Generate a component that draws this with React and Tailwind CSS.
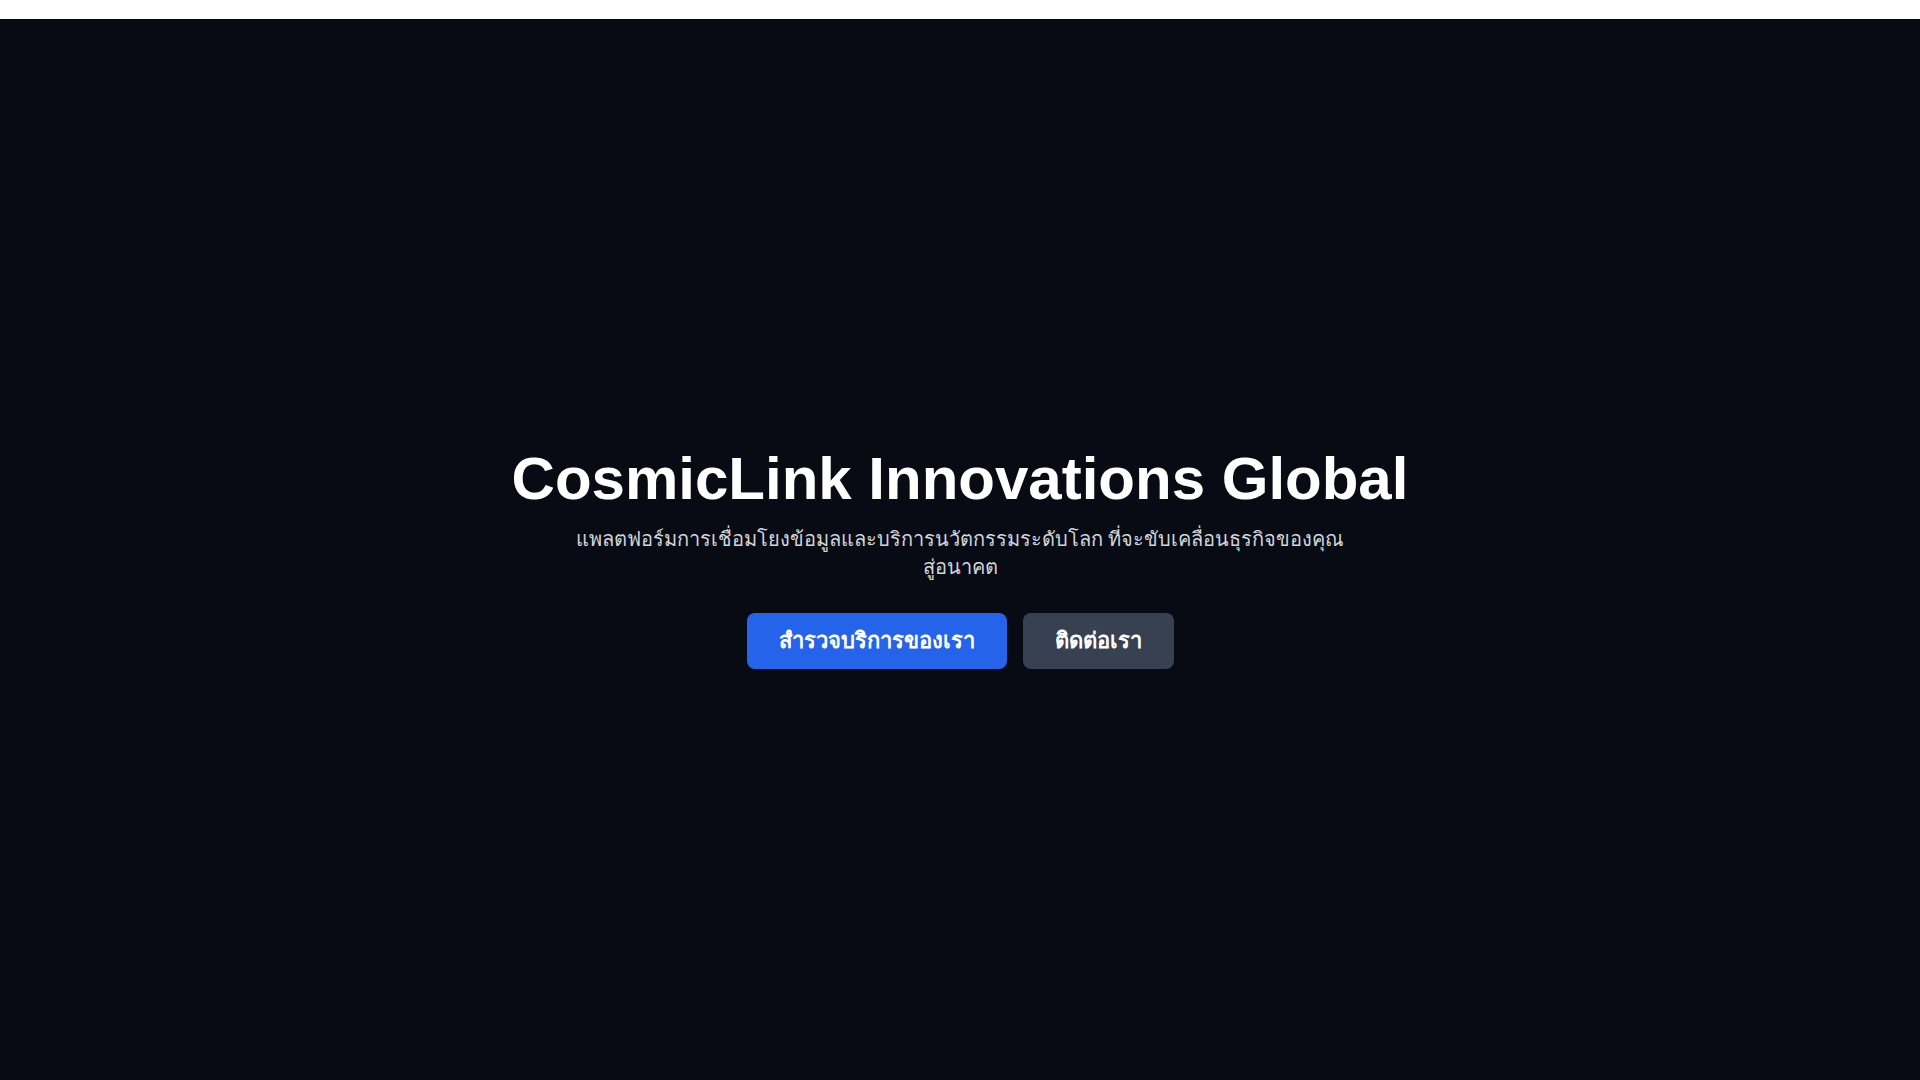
export default function App() {
  return (
    <div className="h-screen overflow-y-scroll font-['Liberation_Sans',sans-serif] [&::-webkit-scrollbar]:w-[15px] [&::-webkit-scrollbar-track]:bg-[#f1f1f1] [&::-webkit-scrollbar-thumb]:bg-[#c1c1c1] [&::-webkit-scrollbar-thumb]:border-x-[3px] [&::-webkit-scrollbar-thumb]:border-solid [&::-webkit-scrollbar-thumb]:border-[#f1f1f1]">
      <div className="h-[19px] bg-white"></div>
      <section className="h-screen bg-[#080b13] flex flex-col items-center justify-center text-center px-4">
        <h1 className="text-6xl leading-none font-bold text-white mb-4">
          CosmicLink Innovations Global
        </h1>
        <p className="text-xl text-[#d1d5db] max-w-[772px] mb-8">
          แพลตฟอร์มการเชื่อมโยงข้อมูลและบริการนวัตกรรมระดับโลก ที่จะขับเคลื่อนธุรกิจของคุณสู่อนาคต
        </p>
        <div className="flex gap-4">
          <button className="bg-[#2563eb] text-white text-[22px] leading-7 font-semibold px-8 py-3.5 rounded-lg">
            สำรวจบริการของเรา
          </button>
          <button className="bg-[#374151] text-white text-[22px] leading-7 font-semibold px-8 py-3.5 rounded-lg">
            ติดต่อเรา
          </button>
        </div>
      </section>
    </div>
  );
}
